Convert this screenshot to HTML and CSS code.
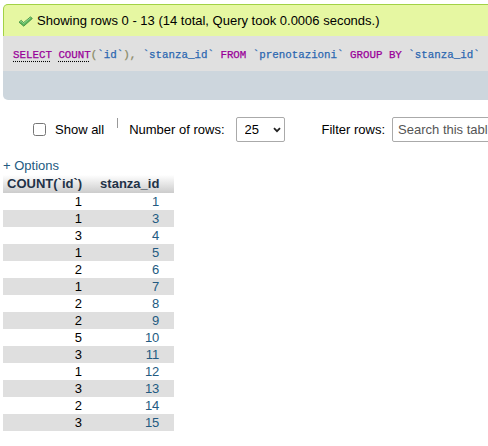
FILE: index.html
```html
<!DOCTYPE html>
<html>
<head>
<meta charset="utf-8">
<link rel="stylesheet" href="styles.css">
</head>
<body>
<div class="page">
  <div class="success">
    <svg class="check" width="15" height="11" viewBox="0 0 15 11">
      <path d="M1 6.2 L3.2 4.3 L5.6 6.6 L12.6 0.8 L14.3 2.6 L5.7 10.2 Z" fill="#5cb85c" stroke="#3d8b3d" stroke-width="0.8" stroke-linejoin="round"/>
      <path d="M2.2 6.1 L3.2 5.2 L5.6 7.4 L12.6 1.7" fill="none" stroke="#9fdc9f" stroke-width="0.8"/>
    </svg>
    <span>Showing rows 0 - 13 (14 total, Query took 0.0006 seconds.)</span>
  </div>
  <div class="sql">
    <code><span class="kw link">SELECT</span> <span class="kw link">COUNT</span><span class="punc">(</span><span class="id">`id`</span><span class="punc">),</span> <span class="id">`stanza_id`</span> <span class="kw">FROM</span> <span class="id">`prenotazioni`</span> <span class="kw">GROUP BY</span> <span class="id">`stanza_id`</span></code>
  </div>
  <div class="tools"></div>

  <div class="controls">
    <label class="showall"><input type="checkbox" class="cb"><span>Show all</span></label>
    <span class="divider"></span>
    <span class="label">Number of rows:</span>
    <span class="selectwrap">
      <select class="rows"><option>25</option></select>
      <svg class="chev" width="8" height="6" viewBox="0 0 8 6"><path d="M1 1.2 L4 4.2 L7 1.2" fill="none" stroke="#222" stroke-width="1.8"/></svg>
    </span>
    <span class="label filter">Filter rows:</span>
    <input class="search" type="text" placeholder="Search this table">
  </div>

  <a class="options">+ Options</a>

  <table class="results">
    <thead>
      <tr><th class="c1">COUNT(`id`)</th><th class="c2">stanza_id</th></tr>
    </thead>
    <tbody>
      <tr><td>1</td><td class="lnk">1</td></tr>
      <tr><td>1</td><td class="lnk">3</td></tr>
      <tr><td>3</td><td class="lnk">4</td></tr>
      <tr><td>1</td><td class="lnk">5</td></tr>
      <tr><td>2</td><td class="lnk">6</td></tr>
      <tr><td>1</td><td class="lnk">7</td></tr>
      <tr><td>2</td><td class="lnk">8</td></tr>
      <tr><td>2</td><td class="lnk">9</td></tr>
      <tr><td>5</td><td class="lnk">10</td></tr>
      <tr><td>3</td><td class="lnk">11</td></tr>
      <tr><td>1</td><td class="lnk">12</td></tr>
      <tr><td>3</td><td class="lnk">13</td></tr>
      <tr><td>2</td><td class="lnk">14</td></tr>
      <tr><td>3</td><td class="lnk">15</td></tr>
    </tbody>
  </table>
</div>
</body>
</html>
```

FILE: styles.css
```css
html, body {
  margin: 0;
  padding: 0;
  background: #fff;
  overflow: hidden;
}
body {
  font-family: "Liberation Sans", Arial, sans-serif;
  font-size: 13px;
  color: #000;
}
.page {
  padding: 4px 0 0 3px;
  width: 540px;
}
.success {
  display: flex;
  align-items: center;
  height: 31px;
  background: #e6f7a2;
  border: 1px solid #a2d246;
  border-bottom: none;
  border-radius: 5px 5px 0 0;
  padding-left: 14px;
  box-sizing: content-box;
}
.success .check {
  margin-right: 4px;
  margin-top: 1px;
}
.sql {
  height: 35px;
  background: #e0e0e0;
  display: flex;
  align-items: center;
  padding-left: 10px;
}
.sql code {
  font-family: "Liberation Mono", "Courier New", monospace;
  font-size: 10.8px;
  white-space: pre;
  position: relative;
  top: 1px;
  -webkit-text-stroke: 0.25px currentColor;
}
.kw { color: #990099; }
.link {
  text-decoration: underline dotted #000;
  text-underline-offset: 3px;
}
.id { color: #2b67b0; }
.punc { color: #8a8a66; }
.tools {
  height: 29px;
  background: #cdd6dd;
  border-radius: 0 0 0 5px;
}
.controls {
  display: flex;
  align-items: center;
  height: 25px;
  margin-top: 17px;
  padding-left: 30px;
  white-space: nowrap;
}
.controls > * { flex-shrink: 0; }
.showall {
  display: flex;
  align-items: center;
}
.cb {
  margin: 0 9px 0 0;
  width: 13px;
  height: 13px;
}
.divider {
  width: 0;
  height: 10px;
  border-left: 1px solid #999;
  margin: 1px 11px 0 13px;
  align-self: flex-start;
}
.label { color: #000; }
.selectwrap {
  position: relative;
  margin-left: 11px;
  display: inline-block;
  height: 25px;
}
.rows {
  appearance: none;
  -webkit-appearance: none;
  width: 49px;
  height: 25px;
  border: 1px solid #aaa;
  border-radius: 2px;
  background: #fff;
  font-family: "Liberation Sans", Arial, sans-serif;
  font-size: 13px;
  color: #000;
  padding: 0 0 0 8px;
  margin: 0;
}
.chev {
  position: absolute;
  left: 37px;
  top: 10px;
  pointer-events: none;
}
.filter { margin-left: 37px; }
.search {
  margin-left: 7px;
  width: 150px;
  height: 25px;
  box-sizing: border-box;
  border: 1px solid #aaa;
  border-radius: 2px;
  font-family: "Liberation Sans", Arial, sans-serif;
  font-size: 13px;
  padding: 0 0 0 5px;
}
.search::placeholder { color: #555; }
.options {
  display: block;
  color: #235a81;
  line-height: 15px;
  margin-top: 16px;
}
.results {
  border-collapse: collapse;
  margin-top: 2px;
}
.results th {
  background: linear-gradient(#ffffff, #cccccc);
  color: #1f3247;
  font-weight: bold;
  text-align: left;
  height: 18px;
  padding: 0;
  line-height: 16px;
}
.results th.c1 { padding: 0 11px 0 4px; }
.results th.c2 { padding: 0 15px 0 7px; }
.results td {
  height: 17px;
  padding: 0 11px 0 4px;
  line-height: 15px;
  text-align: right;
}
.results td.lnk {
  color: #235a81;
  padding: 0 15px 0 7px;
}
.results tbody tr:nth-child(even) td {
  background: #dfdfdf;
}
```
